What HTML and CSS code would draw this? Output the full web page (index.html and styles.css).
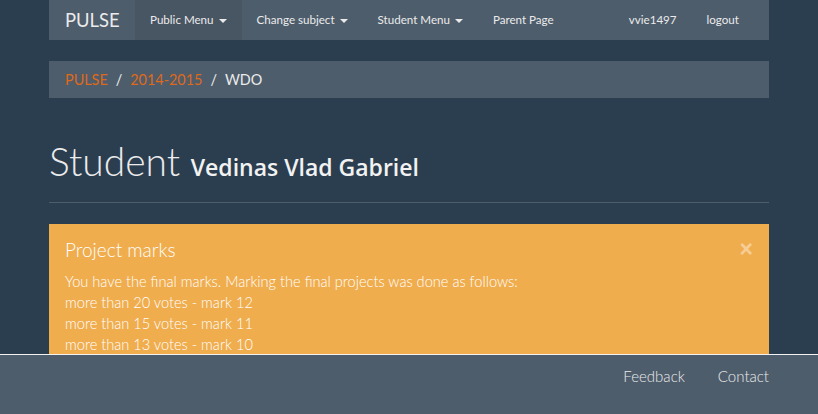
FILE: index.html
```html
<!DOCTYPE html>
<html lang="en">
<head>
    <meta charset="UTF-8">
    <meta name="viewport" content="width=device-width, initial-scale=1.0">
    <title>PULSE - Student</title>
    <link rel="stylesheet" href="styles.css">
</head>
<body>
    <div class="container">
        <nav class="navbar">
            <a class="brand" href="#">PULSE</a>
            <ul class="nav">
                <li class="open"><a href="#">Public Menu <span class="caret"></span></a></li>
                <li><a href="#">Change subject <span class="caret"></span></a></li>
                <li><a href="#">Student Menu <span class="caret"></span></a></li>
                <li><a href="#">Parent Page</a></li>
            </ul>
            <ul class="nav nav-right">
                <li><a href="#">vvie1497</a></li>
                <li><a href="#">logout</a></li>
            </ul>
        </nav>

        <ol class="breadcrumb">
            <li><a href="#">PULSE</a></li>
            <li><a href="#">2014-2015</a></li>
            <li class="active">WDO</li>
        </ol>

        <div class="page-header">
            <h1>Student <small>Vedinas Vlad Gabriel</small></h1>
        </div>

        <div class="alert">
            <div class="alert-head">
                <h4>Project marks</h4>
                <button class="close">&times;</button>
            </div>
            You have the final marks. Marking the final projects was done as follows:<br>
            more than 20 votes - mark 12<br>
            more than 15 votes - mark 11<br>
            more than 13 votes - mark 10<br>
            more than 10 votes - mark 9<br>
            less than 10 votes - mark 8
        </div>
    </div>

    <footer class="footer">
        <div class="footer-inner">
            <a href="#">Feedback</a>
            <a href="#">Contact</a>
        </div>
    </footer>
</body>
</html>
```

FILE: styles.css
```css
body {
    margin: 0;
    background: #2b3e50;
    color: #ebebeb;
    font-family: Lato, "Open Sans", sans-serif;
    font-size: 14.6px;
    font-weight: 300;
    line-height: 21px;
}
a {
    color: #df691a;
    text-decoration: none;
}
.container {
    width: 720px;
    margin: 0 auto;
    padding-bottom: 80px;
}
.navbar {
    display: flex;
    height: 40px;
    background: #4e5d6c;
    margin-bottom: 21px;
    padding-right: 15px;
}
.brand {
    color: #ebebeb;
    font-size: 18.4px;
    font-weight: 400;
    line-height: 40px;
    padding: 0 15px 0 16px;
    width: 55px;
}
.nav {
    display: flex;
    list-style: none;
    margin: 0;
    padding: 0;
}
.nav-right {
    margin-left: auto;
}
.nav a {
    display: block;
    color: #ebebeb;
    font-size: 11.6px;
    font-weight: 400;
    line-height: 40px;
    padding: 0 15px;
}
.nav .open a {
    background: #485563;
}
.caret {
    display: inline-block;
    width: 0;
    height: 0;
    margin-left: 2px;
    vertical-align: middle;
    border-top: 4px solid #ebebeb;
    border-left: 4px solid transparent;
    border-right: 4px solid transparent;
}
.breadcrumb {
    list-style: none;
    margin: 0 0 21px;
    padding: 8px 16px;
    background: #4e5d6c;
    display: flex;
    font-size: 14.4px;
    font-weight: 400;
}
.breadcrumb li + li:before {
    content: "/";
    padding: 0 8px 0 8px;
    color: #ebebeb;
}
.breadcrumb .active {
    color: #ebebeb;
}
.page-header {
    margin: 42px 0 21px;
    padding-bottom: 9px;
    border-bottom: 1px solid #4e5d6c;
}
.page-header h1 {
    margin: 0 0 10px;
    font-size: 39px;
    font-weight: 300;
    line-height: 43px;
    height: 43px;
    color: #ebebeb;
}
.page-header small {
    font-family: "Open Sans", sans-serif;
    font-size: 23px;
    font-weight: 600;
    line-height: 1;
    color: #f2f2f2;
}
.alert {
    background: #f0ad4e;
    color: #fff;
    padding: 15px 16px;
    margin-bottom: 21px;
}
.alert-head {
    display: flex;
    justify-content: space-between;
    align-items: flex-start;
}
.alert h4 {
    margin: 0 0 10px;
    font-size: 19px;
    font-weight: 300;
    line-height: 22px;
}
.close {
    background: none;
    border: none;
    padding: 0;
    margin: -1px 0 0;
    color: #fff;
    opacity: 0.4;
    font-family: "Liberation Sans", sans-serif;
    font-size: 23px;
    font-weight: 700;
    line-height: 1;
}
.footer {
    position: fixed;
    left: 0;
    right: 0;
    bottom: 0;
    height: 59px;
    background: #4e5d6c;
    border-top: 1px solid #f2f2f2;
}
.footer-inner {
    width: 720px;
    margin: 0 auto;
    display: flex;
    justify-content: flex-end;
    gap: 33px;
    padding-top: 11px;
    font-size: 15px;
}
.footer a {
    color: #ebebeb;
    font-weight: 300;
}
```
